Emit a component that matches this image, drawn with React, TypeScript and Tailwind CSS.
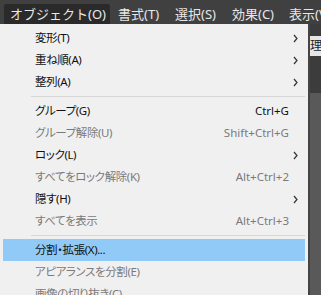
const FONT = "font-['Noto_Sans','Noto_Sans_CJK_JP',sans-serif]";

type Item =
  | { sep: true }
  | { label: string; shortcut?: string; sub?: boolean; disabled?: boolean; active?: boolean };

const ITEMS: Item[] = [
  { label: "変形(T)", sub: true },
  { label: "重ね順(A)", sub: true },
  { label: "整列(A)", sub: true },
  { sep: true },
  { label: "グループ(G)", shortcut: "Ctrl+G" },
  { label: "グループ解除(U)", shortcut: "Shift+Ctrl+G", disabled: true },
  { label: "ロック(L)", sub: true },
  { label: "すべてをロック解除(K)", shortcut: "Alt+Ctrl+2", disabled: true },
  { label: "隠す(H)", sub: true },
  { label: "すべてを表示", shortcut: "Alt+Ctrl+3", disabled: true },
  { sep: true },
  { label: "分割・拡張(X)...", active: true },
  { label: "アピアランスを分割(E)", disabled: true },
  { label: "画像の切り抜き(C)", disabled: true },
];

function Chevron() {
  return (
    <svg width="5" height="9" viewBox="0 0 5 9" className="text-[#333]">
      <path d="M1 1l3 3.5L1 8" fill="none" stroke="currentColor" strokeWidth="1.2" />
    </svg>
  );
}

export default function App() {
  return (
    <div className={`w-[321px] h-[295px] overflow-hidden bg-[#535353] ${FONT} flex flex-col`}>
      <div className="h-[24px] shrink-0 bg-[#404040] flex items-end text-[13px] leading-[20px] text-[#e8e8e8] whitespace-nowrap">
        <div className="shrink-0 ml-[4px] w-[106px] h-[20px] pl-[6px] bg-[#2a2a2a] rounded-t-[2px]">オブジェクト(O)</div>
        <div className="shrink-0 ml-[8px] w-[57px] h-[20px]">書式(T)</div>
        <div className="shrink-0 w-[57px] h-[20px]">選択(S)</div>
        <div className="shrink-0 w-[57px] h-[20px]">効果(C)</div>
        <div className="shrink-0 h-[20px]">表示(V)</div>
      </div>
      <div className="flex flex-1 min-h-0">
        <div className="w-[3px] bg-[#5e5e5e] flex flex-col">
          <div className="h-[36px] bg-[#404040]" />
          <div className="h-[35px] bg-[#2e2e2e]" />
        </div>
        <div className="w-[308px] shrink-0 bg-[#f0f0f0] pt-[3px] px-[3px] text-[11.5px] leading-[16px] tracking-[-0.4px] [font-feature-settings:'palt']">
          {ITEMS.map((it, i) =>
            "sep" in it ? (
              <div key={i} className="ml-[28px] my-[3px] h-px bg-[#d7d7d7]" />
            ) : (
              <div
                key={i}
                className={`h-[22px] flex items-center pl-[32px] pr-[7px] ${it.active ? "bg-[#91c9f7]" : ""} ${
                  it.disabled ? "text-[#7a7a7a]" : "text-[#111]"
                }`}
              >
                <span className="flex-1 whitespace-nowrap">{it.label}</span>
                {it.shortcut && <span className="whitespace-nowrap mr-[9px] tracking-normal">{it.shortcut}</span>}
                {it.sub && <Chevron />}
              </div>
            )
          )}
        </div>
        <div className="flex-1 flex">
          <div className="w-[2px] bg-[#444]" />
          <div className="flex-1 flex flex-col bg-[#595959]">
            <div className="h-[12px] bg-[#3c3c3c]" />
            <div className="h-[20px] bg-[#e6e6e6] text-[12px] leading-[20px] text-[#222] whitespace-nowrap overflow-hidden">理</div>
            <div className="h-[37px] bg-[#3c3c3c]" />
          </div>
        </div>
      </div>
    </div>
  );
}
